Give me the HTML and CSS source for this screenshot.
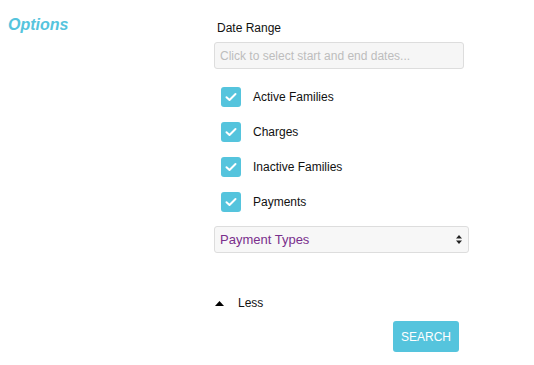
FILE: index.html
```html
<!DOCTYPE html>
<html lang="en">
<head>
    <meta charset="UTF-8">
    <title>Options</title>
    <link rel="stylesheet" href="styles.css">
</head>
<body>
    <div class="options">
        <h3 class="options-title">Options</h3>
        <div class="options-body">
            <label class="field-label">Date Range</label>
            <input type="text" class="date-input" placeholder="Click to select start and end dates...">

            <div class="checks">
                <label class="check"><span class="box"><svg width="12" height="10" viewBox="0 0 12 10"><path d="M1.5 5.2 L4.5 8 L10.5 2" fill="none" stroke="#fff" stroke-width="2" stroke-linecap="round" stroke-linejoin="round"/></svg></span>Active Families</label>
                <label class="check"><span class="box"><svg width="12" height="10" viewBox="0 0 12 10"><path d="M1.5 5.2 L4.5 8 L10.5 2" fill="none" stroke="#fff" stroke-width="2" stroke-linecap="round" stroke-linejoin="round"/></svg></span>Charges</label>
                <label class="check"><span class="box"><svg width="12" height="10" viewBox="0 0 12 10"><path d="M1.5 5.2 L4.5 8 L10.5 2" fill="none" stroke="#fff" stroke-width="2" stroke-linecap="round" stroke-linejoin="round"/></svg></span>Inactive Families</label>
                <label class="check"><span class="box"><svg width="12" height="10" viewBox="0 0 12 10"><path d="M1.5 5.2 L4.5 8 L10.5 2" fill="none" stroke="#fff" stroke-width="2" stroke-linecap="round" stroke-linejoin="round"/></svg></span>Payments</label>
            </div>

            <div class="select">
                <span>Payment Types</span>
                <svg width="6" height="9" viewBox="0 0 6 9"><path d="M0 3.5 L3 0 L6 3.5 Z M0 5.5 L3 9 L6 5.5 Z" fill="#222"/></svg>
            </div>

            <div class="less">
                <svg width="9" height="5" viewBox="0 0 9 5"><path d="M0 5 L4.5 0 L9 5 Z" fill="#000"/></svg>
                <span>Less</span>
            </div>

            <div class="actions">
                <button class="search">SEARCH</button>
            </div>
        </div>
    </div>
</body>
</html>
```

FILE: styles.css
```css
:root {
    --info: #55c4dd;
    --font: 'Liberation Sans', Arial, sans-serif;
}

body {
    margin: 0;
    font-family: var(--font);
    background: #fff;
    color: #111;
}

.options {
    display: grid;
    grid-template-columns: 214px 256px;
    padding-top: 14px;
}

.options-title {
    margin: 0;
    padding: 2px 0 0 8px;
    font-size: 16px;
    font-style: italic;
    font-weight: bold;
    color: var(--info);
    line-height: 18px;
}

.options-body {
    display: flex;
    flex-direction: column;
}

.field-label {
    font-size: 12px;
    padding-left: 3px;
    margin-top: 7px;
    line-height: 15px;
}

.date-input {
    margin-top: 6px;
    width: 250px;
    height: 27px;
    box-sizing: border-box;
    border: 1px solid #ddd;
    border-radius: 3px;
    background: #f6f6f6;
    padding: 0 5px;
    font-family: var(--font);
    font-size: 12px;
}

.date-input::placeholder {
    color: #bdbdbd;
}

.checks {
    display: flex;
    flex-direction: column;
    gap: 15px;
    margin-top: 18px;
    padding-left: 7px;
}

.check {
    display: flex;
    align-items: center;
    font-size: 12px;
    height: 20px;
}

.box {
    width: 20px;
    height: 20px;
    border-radius: 3px;
    background: var(--info);
    display: flex;
    align-items: center;
    justify-content: center;
    margin-right: 12px;
}

.select {
    margin-top: 14px;
    width: 255px;
    height: 27px;
    box-sizing: border-box;
    border: 1px solid #ddd;
    border-radius: 3px;
    background: #f7f7f7;
    display: flex;
    align-items: center;
    justify-content: space-between;
    padding: 0 6px 0 5px;
    font-size: 13px;
    color: #7a2f8c;
}

.less {
    margin-top: 43px;
    display: flex;
    align-items: center;
    gap: 14px;
    padding-left: 1px;
    font-size: 12px;
    height: 14px;
}

.actions {
    display: flex;
    justify-content: flex-end;
    width: 245px;
    margin-top: 11px;
}

.search {
    width: 66px;
    height: 31px;
    border: none;
    border-radius: 3px;
    background: var(--info);
    color: #fff;
    font-family: var(--font);
    font-size: 12px;
    cursor: pointer;
}
```
